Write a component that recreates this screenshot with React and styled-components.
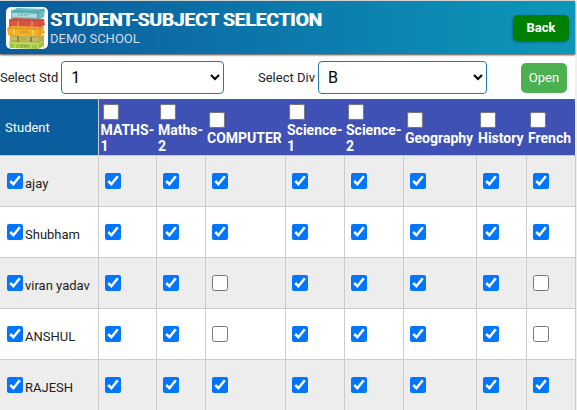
import { useState } from "react";
import styled, { createGlobalStyle } from "styled-components";

const GlobalStyle = createGlobalStyle`
  * {
    box-sizing: border-box;
  }
  body {
    margin: 0;
    background-color: #fff;
    color: #212121;
    font-family: Roboto, "Liberation Sans", sans-serif;
    font-size: 13px;
  }
`;
const Page = styled.main`
  border-top: 1px solid #ddd;
  border-right: 2px solid #f0f0f0;
`;
const Header = styled.header`
  display: flex;
  align-items: center;
  gap: 2px;
  height: 53px;
  padding: 0 6px;
  color: #fff;
  background: linear-gradient(to right, #0b5a9b, #0d98ba);
  box-shadow: 0 1px 2px #444;
`;
const Logo = styled.svg`
  width: 42px;
  height: 42px;
  border-radius: 5px;
  background-color: #fff;
`;
const Heading = styled.div`
  flex: 1;
  white-space: nowrap;
`;
const Title = styled.h1`
  margin: 0;
  font-size: 19px;
  font-weight: 500;
  line-height: 22px;
  text-shadow: 1px 0 #fff;
`;
const School = styled.div`
  color: #d3dde8;
  font-size: 13px;
  line-height: 15px;
`;
const Button = styled.button`
  height: ${(props) => (props.$back ? "26px" : "30px")};
  padding: 0;
  width: ${(props) => (props.$back ? "56px" : "46px")};
  border: 0;
  border-radius: 5px;
  color: #fff;
  background-color: ${(props) => (props.$back ? "#008000" : "#4caf50")};
  box-shadow: ${(props) => (props.$back ? "0 1px 3px #0006" : "none")};
  font-family: inherit;
  font-size: 13px;
  font-weight: ${(props) => (props.$back ? 700 : 400)};
  cursor: pointer;
`;
const Filters = styled.form`
  display: grid;
  grid-template-columns: 224fr 229fr 46px;
  column-gap: 34px;
  align-items: center;
  height: 45px;
  padding: 2px 8px 0 0;
`;
const Field = styled.div`
  display: flex;
  align-items: center;
  gap: 3px;
  white-space: nowrap;
`;
const Select = styled.select`
  flex: 1;
  min-width: 0;
  height: 33px;
  padding: 0 5px;
  border: 1px solid #2379b5;
  border-radius: 4px;
  color: #000;
  background-color: #fff;
  font-family: inherit;
  font-size: 16px;
`;
const Table = styled.table`
  width: 100%;
  table-layout: fixed;
  border-collapse: collapse;
`;
const Col = styled.col`
  width: ${(props) => props.$width}px;
`;
const StudentHead = styled.th`
  height: 56px;
  padding: 0 5px;
  border-top: 1px solid #2e6a8e;
  border-right: 1px solid #ccc;
  color: #fff;
  background-color: #0b5e9e;
  font-weight: 400;
  text-align: left;
`;
const SubjectHead = styled.th`
  padding: 2px 2px 0;
  border-top: 1px solid #2e6a8e;
  color: #fff;
  background-color: #3f51b5;
  font-size: 14px;
  font-weight: 700;
  line-height: 16px;
  text-align: left;
`;
const Row = styled.tr`
  background-color: #fff;
  &:nth-child(odd) {
    background-color: #ededed;
  }
`;
const Cell = styled.td`
  height: 51px;
  padding: 0 6px;
  border: 1px solid #ccc;
  white-space: nowrap;
  &:first-child {
    border-left: 0;
    padding-left: 7px;
  }
`;
const Check = styled.input`
  display: block;
  width: 16px;
  height: 16px;
  margin: ${(props) => (props.$head ? "0 2px 2px" : "0")};
`;
const Name = styled.label`
  display: flex;
  align-items: center;
  gap: 2px;
  line-height: 22px;
  & > span {
    padding-top: 6px;
  }
`;

const subjects = [
  { name: "MATHS-1", width: 58 },
  { name: "Maths-2", width: 49 },
  { name: "COMPUTER", width: 80 },
  { name: "Science-1", width: 59 },
  { name: "Science-2", width: 59 },
  { name: "Geography", width: 73 },
  { name: "History", width: 50 },
  { name: "French", width: 49 },
];

const students = [
  { name: "ajay", without: [] },
  { name: "Shubham", without: [] },
  { name: "viran yadav", without: ["COMPUTER", "French"] },
  { name: "ANSHUL", without: ["COMPUTER", "French"] },
  { name: "RAJESH", without: [] },
];

function BooksLogo() {
  return (
    <Logo viewBox="0 0 42 42" aria-hidden="true">
      <path d="M5 4l6-3 28 1-1 8-6 3-27-1z" fill="#64bdc4" />
      <path d="M5 4l27 1 6-3M32 5v8" fill="none" stroke="#4a9ba6" />
      <path d="M6 6l25 1v4L6 10z" fill="#a5dcdc" />
      <path d="M3 13l5-2 30 1 1 6-5 3-31-1z" fill="#dc5542" />
      <path d="M3 13l31 1 4-2M34 14v7" fill="none" stroke="#bd4638" />
      <path d="M12 14v6M26 14v6" stroke="#e87b61" strokeWidth="2" />
      <path d="M1 21l5-2 31 1 2 6-5 3-32-1z" fill="#f1ae24" />
      <path d="M2 21l32 1 4-2M34 22v7" fill="none" stroke="#d58e20" />
      <path d="M8 22v5M27 23v5" stroke="#f8c756" strokeWidth="2" />
      <path d="M4 28l30 1 4-1v6l-5 2-29-1z" fill="#b9ae4a" />
      <path d="M5 30l27 1v3L5 33z" fill="#cbbd62" />
      <path d="M12 29v6M25 30v5" stroke="#8f8540" strokeWidth="2" />
      <path d="M3 35l31 1 4-2v5l-6 3-28-1z" fill="#9cc63c" />
      <path d="M4 36l28 1v4M9 37v4M25 37v4" fill="none" stroke="#b9d95e" strokeWidth="2" />
      <path
        d="M14 25h8M14 32h7M15 39h7M14 17h8M12 8h10"
        stroke="#77612e"
        strokeDasharray="2 1"
        opacity="0.6"
      />
    </Logo>
  );
}

export default function App() {
  const [std, setStd] = useState("1");
  const [div, setDiv] = useState("B");
  return (
    <Page>
      <GlobalStyle />
      <Header>
        <BooksLogo />
        <Heading>
          <Title>STUDENT-SUBJECT SELECTION</Title>
          <School>DEMO SCHOOL</School>
        </Heading>
        <Button $back type="button">
          Back
        </Button>
      </Header>
      <Filters>
        <Field>
          <label htmlFor="std">Select Std</label>
          <Select id="std" value={std} onChange={(e) => setStd(e.target.value)}>
            <option>1</option>
            <option>2</option>
          </Select>
        </Field>
        <Field>
          <label htmlFor="div">Select Div</label>
          <Select id="div" value={div} onChange={(e) => setDiv(e.target.value)}>
            <option>A</option>
            <option>B</option>
          </Select>
        </Field>
        <Button type="button">Open</Button>
      </Filters>
      <Table>
        <colgroup>
          <Col $width={98} />
          {subjects.map((subject) => (
            <Col key={subject.name} $width={subject.width} />
          ))}
        </colgroup>
        <thead>
          <tr>
            <StudentHead>Student</StudentHead>
            {subjects.map((subject) => (
              <SubjectHead key={subject.name}>
                <label>
                  <Check $head type="checkbox" />
                  {subject.name}
                </label>
              </SubjectHead>
            ))}
          </tr>
        </thead>
        <tbody>
          {students.map((student) => (
            <Row key={student.name}>
              <Cell>
                <Name>
                  <Check type="checkbox" defaultChecked />
                  <span>{student.name}</span>
                </Name>
              </Cell>
              {subjects.map((subject) => (
                <Cell key={subject.name}>
                  <Check
                    type="checkbox"
                    aria-label={`${student.name} ${subject.name}`}
                    defaultChecked={!student.without.includes(subject.name)}
                  />
                </Cell>
              ))}
            </Row>
          ))}
        </tbody>
      </Table>
    </Page>
  );
}
